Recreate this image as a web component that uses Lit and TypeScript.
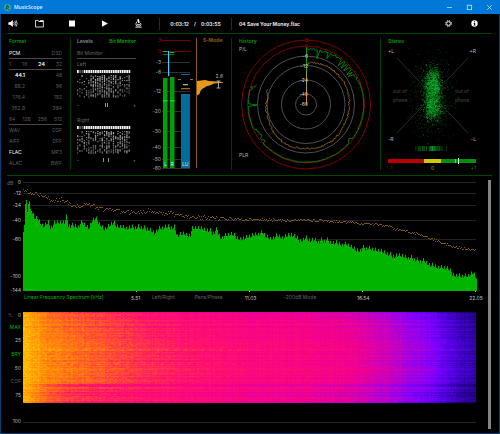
import { LitElement, html, svg, css } from "lit";
import { customElement, query } from "lit/decorators.js";

type Point = [number, number];

/* Small deterministic generator so every paint shows the same signal. */
function randomSource(seed: number): () => number {
  let s = seed >>> 0;
  return () => {
    s = (s + 0x6d2b79f5) >>> 0;
    let t = s;
    t = Math.imul(t ^ (t >>> 15), t | 1);
    t ^= t + Math.imul(t ^ (t >>> 7), t | 61);
    return ((t ^ (t >>> 14)) >>> 0) / 4294967296;
  };
}

function interpolate(points: Point[], x: number): number {
  if (x <= points[0][0]) return points[0][1];
  for (let i = 1; i < points.length; i++) {
    const [x1, y1] = points[i];
    if (x <= x1) {
      const [x0, y0] = points[i - 1];
      return y0 + ((y1 - y0) * (x - x0)) / (x1 - x0);
    }
  }
  return points[points.length - 1][1];
}

const panelStyles = css`
  :host {
    display: block;
    box-sizing: border-box;
    min-width: 0;
    font-size: 5px;
    line-height: 6px;
  }
  h2,
  h3,
  p {
    margin: 0;
    font-size: 5px;
    line-height: 6px;
  }
  button {
    appearance: none;
    margin: 0;
    padding: 0;
    border: 0;
    background: none;
    color: inherit;
    font: inherit;
    cursor: pointer;
  }
  svg {
    display: block;
    width: 100%;
    height: auto;
    overflow: visible;
    font-size: 5px;
  }
`;

@customElement("tool-bar")
export class ToolBar extends LitElement {
  static styles = [
    panelStyles,
    css`
      .bar {
        display: flex;
        align-items: center;
        height: 19px;
        border-bottom: 1px solid #004a00;
        margin: 0 7px 0 6px;
        padding-right: 12px;
        font-weight: 700;
        color: #e4e4e4;
      }
      .group {
        display: flex;
        gap: 22px;
      }
      .transport {
        margin-left: 16px;
      }
      .icon {
        display: block;
        width: 11px;
        height: 11px;
        color: #fff;
      }
      .icon svg {
        width: 11px;
        height: 11px;
      }
      .time {
        display: flex;
        justify-content: center;
        gap: 5px;
        width: 71px;
        margin-left: 15px;
        padding: 3px 0;
        border: solid #004a00;
        border-width: 0 1px;
      }
      .track {
        flex: 1;
        margin-left: 7px;
      }
      .right {
        gap: 15px;
      }
    `,
  ];

  render() {
    return html`
      <div class="bar">
        <button class="icon" aria-label="Volume">
          <svg viewBox="0 0 11 11" fill="none" stroke="currentColor">
            <path d="M1.4 4.2h1.8L5.8 2v7L3.200 6.800H1.400z" fill="currentColor" stroke="none" />
            <path d="M6.700 4q1 1.500 0 3M7.900 3q1.600 2.500 0 5M9.100 2.300q2.100 3.200 0 6.400" stroke-width=".7" />
          </svg>
        </button>
        <div class="group transport">
          <button class="icon" aria-label="Open folder">
            <svg viewBox="0 0 11 11" fill="none" stroke="currentColor" stroke-width=".8">
              <path d="M1.500 9V2.400h2.700l.8 1.100h4.400V9zM4.500 3.500h4.900V2.600H6" />
            </svg>
          </button>
          <button class="icon" aria-label="Stop">
            <svg viewBox="0 0 11 11"><rect x="2" y="2.500" width="6" height="6" fill="currentColor" /></svg>
          </button>
          <button class="icon" aria-label="Play">
            <svg viewBox="0 0 11 11"><path d="M2 2.500l6 3-6 3.200z" fill="currentColor" /></svg>
          </button>
          <button class="icon" aria-label="Analyse">
            <svg viewBox="0 0 11 11" fill="none" stroke="currentColor" stroke-width=".8">
              <path d="M4.200 1.400l1.600-.5 1 3.700-1.600.5z" fill="currentColor" stroke="none" />
              <path d="M4 3.500Q1.800 6 3.600 8h3.600q1.400-1.300.3-3M2.300 9.200h6.500M4 6.400h3" />
            </svg>
          </button>
        </div>
        <div class="time"><span>0:03:12</span><span>/</span><span>0:03:55</span></div>
        <span class="track">04 Save Your Money.flac</span>
        <div class="group right">
          <button class="icon" aria-label="Settings">
            <svg viewBox="0 0 11 11" fill="none" stroke="currentColor">
              <circle cx="5.500" cy="5.500" r="2.900" stroke-width=".9" stroke-dasharray="1.400 .88" />
              <circle cx="5.500" cy="5.500" r="1.900" stroke-width=".9" />
            </svg>
          </button>
          <button class="icon" aria-label="Information">
            <svg viewBox="0 0 11 11">
              <circle cx="5.500" cy="5.500" r="3.200" fill="currentColor" />
              <path d="M5 3.300h1v1H5zM4.600 5h1.500v2h.4v.6H4.600V7H5V5.600h-.4z" fill="#000" />
            </svg>
          </button>
        </div>
      </div>
    `;
  }
}

@customElement("format-panel")
export class FormatPanel extends LitElement {
  static styles = [
    panelStyles,
    css`
      h2 {
        height: 10px;
        color: #008c00;
      }
      .row {
        display: flex;
        justify-content: space-between;
        box-sizing: border-box;
        height: 11px;
        padding-top: 2px;
        color: #5c5c5c;
      }
      .ruled {
        border-bottom: 1px solid #484848;
      }
      .rates {
        display: grid;
        grid-template-columns: 16px 1fr;
        text-align: right;
      }
      .on {
        color: #f4f4f4;
      }
      .strong {
        font-weight: 700;
      }
    `,
  ];

  private rates = [["44.1", "48"], ["88.2", "96"], ["176.4", "192"], ["352.8", "384"]];
  private files = [["WAV", "DSF"], ["AIFF", "DFF"], ["FLAC", "MP3"], ["ALAC", "BWF"]];
  private active = ["44.1", "24", "PCM", "FLAC"];

  private cell(text: string) {
    const on = this.active.includes(text);
    const strong = text === "24" || text === "44.1";
    return html`<span class=${on ? (strong ? "on strong" : "on") : ""}>${text}</span>`;
  }

  render() {
    return html`
      <h2>Format</h2>
      <div class="row ruled">${["PCM", "DSD"].map((t) => this.cell(t))}</div>
      <div class="row ruled">${["1", "16", "24", "32"].map((t) => this.cell(t))}</div>
      ${this.rates.map((r) => html`<div class="row rates">${r.map((t) => this.cell(t))}</div>`)}
      <div class="row ruled">${["64", "128", "256", "512"].map((t) => this.cell(t))}</div>
      ${this.files.map((r) => html`<div class="row">${r.map((t) => this.cell(t))}</div>`)}
    `;
  }
}

@customElement("bit-panel")
export class BitPanel extends LitElement {
  static styles = [
    panelStyles,
    css`
      .tabs {
        display: flex;
        justify-content: space-between;
        height: 10px;
        font-weight: 700;
        color: #808080;
      }
      .tabs button {
        height: 6px;
      }
      .tabs .on {
        color: #009c00;
      }
      .name {
        box-sizing: border-box;
        height: 11px;
        padding-top: 2px;
        border-bottom: 1px solid #484848;
        font-weight: 400;
        color: #686868;
      }
      .side {
        height: 11px;
        padding-top: 2px;
        box-sizing: border-box;
        color: #686868;
      }
      .bits {
        padding-right: 5px;
      }
      .offset {
        display: flex;
        justify-content: space-between;
        align-items: center;
        height: 12px;
        margin-bottom: 4px;
        color: #909090;
      }
      .marks {
        display: flex;
        height: 4px;
        border: solid #909090;
        border-width: 0 1px;
        width: 1px;
      }
      .wide {
        width: 4px;
      }
    `,
  ];

  private bits(seed: number) {
    const rnd = randomSource(seed);
    const cells = [];
    for (let c = 0; c < 24; c++) {
      const x = c * 2.2;
      const dim = c > 0 && c < 3;
      cells.push(svg`<rect x=${x} y="0" width="1.700" height="3" fill=${dim ? "#555" : "#f4f4f4"} />`);
      const density = c < 5 ? 0.3 : 0.4 + rnd() * 0.35;
      for (let r = 0; r < 22; r++) {
        if (rnd() < density) {
          const g = Math.round(100 + rnd() * 110);
          cells.push(svg`<rect x=${x} y=${5 + r} width="1.200" height="1" fill=${`rgb(${g},${g},${g})`} />`);
        }
      }
    }
    return html`<svg viewBox="0 0 53 28" aria-hidden="true">${cells}</svg>`;
  }

  private channel(name: string, seed: number, wide: boolean) {
    return html`
      <p class="side">${name}</p>
      <div class="bits">${this.bits(seed)}</div>
      <div class="offset"><span>-</span><span class=${wide ? "marks wide" : "marks"}></span><span>+</span></div>
    `;
  }

  render() {
    return html`
      <div class="tabs"><button>Levels</button><button class="on">Bit Monitor</button></div>
      <h3 class="name">Bit Monitor</h3>
      ${this.channel("Left", 11, false)} ${this.channel("Right", 42, true)}
    `;
  }
}

@customElement("level-meter")
export class LevelMeter extends LitElement {
  static styles = [
    panelStyles,
    css`
      .label {
        fill: #b0b0b0;
        text-anchor: end;
      }
      .hot {
        fill: #b00000;
      }
      .foot {
        fill: #d8e8e0;
      }
      .mode {
        fill: #8a5a10;
        font-weight: 700;
      }
    `,
  ];

  /* Level in dB against its height on the meter. */
  private scale: Array<[string, number]> = [
    ["3", 2], ["0", 13], ["-3", 24], ["-6", 34], ["-12", 53], ["-20", 73],
    ["-30", 93], ["-40", 109], ["-50", 121], ["-60", 130],
  ];

  render() {
    return html`
      <svg viewBox="0 0 82 132" role="img" aria-label="Peak and loudness meter">
        ${this.scale.map(([t, y], i) => svg`
          <rect x="13" y=${y} width="28" height="1" fill=${i < 2 ? "#780000" : "#303030"} />
          <text class=${i < 2 ? "label hot" : "label"} x="12" y=${y + 2}>${t}</text>`)}
        <rect x="14" y="40" width="4.500" height="90" fill="#00a000" />
        <rect x="21" y="39" width="4.500" height="91" fill="#00a000" />
        <rect x="14" y="62" width="4.500" height="1.500" fill="#00e030" />
        <rect x="21" y="62" width="4.500" height="1.500" fill="#00e030" />
        <rect x="14" y="13" width="4.500" height="1" fill="#00b060" />
        <rect x="21" y="14" width="4.500" height="1" fill="#00c040" />
        <rect x="14" y="16" width="11.500" height="1" fill="#007800" />
        <rect x="19" y="13" width="1.200" height="25" fill="#50c8f0" />
        <rect x="32" y="56" width="9" height="74" fill="#006e98" />
        <rect x="32" y="36" width="9" height="1" fill="#006e98" />
        <rect x="29" y="41" width="3" height="1" fill="#a06c18" />
        <rect x="41" y="41" width="3" height="1" fill="#a06c18" />
        <rect x="34" y="46" width="5" height="1.300" fill="#a8a8a8" />
        <rect x="32" y="50" width="9" height="1.300" fill="#a06c18" />
        <text class="foot" x="15" y="128">L</text>
        <text class="foot" x="21.500" y="128">R</text>
        <text class="foot" x="33" y="128">LU</text>
        <rect x="47" y="0" width="1" height="130" fill="#8a5a10" />
        <path d="M48 43l8-1 4 1 14 1v.8l-9 .6-3 1.600-5 1.400-2 1.500-2 1-1.500 2-1 3-2.500 1.500z" fill="#e8981c" />
        <text class="mode" x="54" y="4">S-Mode</text>
        <text class="label" x="74" y="40">2.6</text>
        <path d="M67.500 43h4M69.500 43v7M67.500 50h4" stroke="#c8c8c8" fill="none" stroke-width=".8" />
      </svg>
    `;
  }
}

@customElement("history-panel")
export class HistoryPanel extends LitElement {
  static styles = [
    panelStyles,
    css`
      .title {
        fill: #008c00;
        font-weight: 700;
      }
      .corner {
        fill: #b0b0b0;
      }
      .label {
        fill: #d0d0d0;
        text-anchor: end;
      }
      .hot {
        fill: #c00000;
      }
    `,
  ];

  private rings: Array<[number, string]> = [
    [64.5, "#8c0000"], [58.5, "#8c0000"], [48.5, "#585858"], [39, "#585858"], [24.5, "#585858"], [10.5, "#585858"],
  ];
  private labels: Array<[string, number]> = [["-6", 20], ["-12", 30], ["-24", 44], ["-40", 58], ["-60", 68]];

  private trace(shape: Point[], start: number, end: number, jitter: (a: number, r: number) => number, seed: number) {
    const rnd = randomSource(seed);
    let d = "";
    for (let a = start; a <= end; a += 1.4) {
      const r = interpolate(shape, a) + jitter(a, rnd());
      const t = (a * Math.PI) / 180;
      d += `${d ? "L" : "M"}${(74 + Math.sin(t) * r).toFixed(1)} ${(66.5 - Math.cos(t) * r).toFixed(1)}`;
    }
    return d;
  }

  render() {
    const peak = this.trace([[0, 57], [40, 57.5], [80, 58], [300, 58]], 2, 293, (a, r) => {
      if (a < 22) return r > 0.8 ? -10 : -r * 3;
      if (a < 66) return r > 0.84 ? -7 : -r * 2;
      if (a > 124 && a < 132) return -r * 4;
      if (a > 228 && a < 246) return -r * 5;
      if (a > 268.5 && a < 270.5) return -9;
      if (a > 285) return -r * 6;
      return -r * 0.7;
    }, 5);
    const loud = this.trace(
      [[0, 36], [4, 42], [33, 43.500], [62, 44], [90, 43], [115, 43], [147, 45], [180, 44], [210, 44.300],
        [232, 42.500], [250, 40], [263, 40.500], [280, 38.500], [292, 42]],
      2, 292, (_a, r) => (r - 0.5) * 1.9, 9);
    return html`
      <svg viewBox="0 0 148 132" role="img" aria-label="Loudness history">
        ${this.rings.map(([r, c]) => svg`<circle cx="74" cy="66.500" r=${r} fill="none" stroke=${c} stroke-width=".9" />`)}
        <path d=${peak} fill="none" stroke="#009c14" stroke-width=".8" />
        <path d=${loud} fill="none" stroke="#b87820" stroke-width=".7" />
        <path d="M74.500 9v24" stroke="#00a010" />
        <path d="M74.500 33v18" stroke="#a0a020" />
        <path d="M74.500 51v16" stroke="#d08820" />
        <text class="label hot" x="76" y="4">3</text>
        <text class="label hot" x="76" y="10">0</text>
        ${this.labels.map(([t, y]) => svg`<text class="label" x="76" y=${y}>${t}</text>`)}
        <text class="title" x="7" y="5">History</text>
        <text class="corner" x="7" y="13">P/L</text>
        <text class="corner" x="7" y="119">PLR</text>
      </svg>
    `;
  }
}

@customElement("stereo-panel")
export class StereoPanel extends LitElement {
  static styles = [
    panelStyles,
    css`
      .title {
        fill: #008c00;
        font-weight: 700;
      }
      .corner {
        fill: #b8b8b8;
      }
      .end {
        text-anchor: end;
      }
      .dim {
        fill: #444;
      }
      .low {
        fill: #a00000;
      }
      .mid {
        fill: #b0a800;
        text-anchor: middle;
      }
      .high {
        fill: #008c00;
        text-anchor: end;
      }
    `,
  ];

  private cloud() {
    const rnd = randomSource(77);
    const gauss = () => rnd() + rnd() + rnd() + rnd() - 2;
    const layers = ["", "", ""];
    for (let i = 0; i < 2600; i++) {
      const wide = rnd() < 0.25;
      const x = 51.5 + gauss() * (wide ? 18 : 7);
      const y = wide ? 57 + gauss() * 33 : (rnd() < 0.55 ? 45 : 67) + gauss() * 13;
      layers[wide ? 0 : rnd() < 0.7 ? 1 : 2] += `M${x.toFixed(1)} ${y.toFixed(1)}h.7v.7h-.7z`;
    }
    return ["#00580f", "#007c18", "#10b430"].map((c, i) => svg`<path d=${layers[i]} fill=${c} />`);
  }

  private spread() {
    const rnd = randomSource(3);
    const lines = [];
    for (let x = 22; x < 79; x++) {
      const near = Math.abs(x - 49) / 30;
      if (rnd() > near * 1.3) {
        lines.push(svg`<rect x=${x} y="108" width="1" height="5" fill="#00a82c" opacity=${Math.max(0.15, 1 - near - rnd() * 0.5)} />`);
      }
    }
    return lines;
  }

  render() {
    return html`
      <svg viewBox="0 0 111 132" role="img" aria-label="Stereo field">
        <path d="M16 20L87 95M87 20L16 95" stroke="#303030" stroke-width=".9" />
        ${this.cloud()} ${this.spread()}
        <text class="title" x="7" y="5">Stereo</text>
        <text class="corner" x="7" y="15">+L</text>
        <text class="corner end" x="95" y="15">+R</text>
        <text class="corner" x="7" y="103">-R</text>
        <text class="corner end" x="95" y="103">-L</text>
        <text class="dim" x="12" y="55">out of</text>
        <text class="dim" x="12" y="64">phase</text>
        <text class="dim" x="74" y="55">out of</text>
        <text class="dim" x="74" y="64">phase</text>
        <rect x="7" y="121" width="36" height="4" fill="#b80000" />
        <rect x="43" y="121" width="17" height="4" fill="#d0c800" />
        <rect x="60" y="121" width="35" height="4" fill="#009010" />
        <rect x="74" y="121" width="1" height="4" fill="#60d070" />
        <rect x="77" y="120" width="1" height="6" fill="#fff" />
        <text class="low" x="7" y="132">-1</text>
        <text class="mid" x="51.500" y="132">0</text>
        <text class="high" x="95" y="132">+1</text>
      </svg>
    `;
  }
}

@customElement("spectrum-chart")
export class SpectrumChart extends LitElement {
  static styles = [
    panelStyles,
    css`
      .chart {
        display: grid;
        grid-template-columns: 22px 1fr;
      }
      .scale {
        width: 22px;
        height: 114px;
        grid-row: span 2;
      }
      .plot {
        height: 112px;
      }
      .label {
        fill: #c4c4c4;
        text-anchor: end;
      }
      .unit {
        fill: #686868;
      }
      .axis {
        grid-column: 2;
        display: grid;
        grid-template-columns: repeat(4, 1fr);
        height: 10px;
        color: #646464;
      }
      .cell {
        display: flex;
        align-items: center;
        gap: 20px;
        white-space: nowrap;
      }
      .main {
        color: #00b400;
        margin-left: 1px;
      }
      .mode {
        margin-left: 16px;
      }
      .later {
        margin-left: 33px;
      }
      .tick {
        width: 16px;
        margin: 0 -8px 0 auto;
        padding-top: 2px;
        text-align: center;
        color: #c4c4c4;
      }
    `,
  ];

  private scale: Array<[string, number]> = [
    ["0", 2], ["-12", 13], ["-24", 25], ["-40", 40], ["-60", 59], ["-100", 96], ["-144", 110],
  ];

  private level: Point[] = [
    [0, 52], [1, 45], [2, 24], [3, 20], [4, 32], [5, 24], [6, 21], [7, 29], [9, 33], [11, 38], [15, 38], [18, 43],
    [21, 46], [25, 42], [27, 47], [31, 44], [36, 42], [41, 43], [43, 38], [45, 44], [49, 46], [55, 46], [59, 43],
    [65, 49], [69, 40], [72, 39], [75, 42], [81, 48], [87, 44], [90, 43], [93, 47], [104, 48], [115, 46], [120, 48],
    [127, 48], [131, 52], [137, 49], [151, 47], [154, 55], [167, 54], [169, 50], [183, 49], [189, 52], [194, 50],
    [197, 56], [209, 56], [217, 58], [227, 57], [233, 54], [239, 53], [243, 58], [249, 59], [255, 56], [261, 57],
    [268, 54], [276, 61], [282, 57], [293, 62], [302, 61], [313, 63], [325, 65], [333, 70], [345, 68], [357, 70],
    [369, 75], [377, 77], [389, 79], [401, 81], [407, 86], [423, 89], [429, 93], [437, 95], [445, 96], [450, 93], [453, 99],
  ];

  private peaks: Point[] = [
    [0, 10], [7, 12], [17, 14], [23, 16], [29, 20], [39, 19], [45, 22], [52, 26], [67, 24], [77, 28], [83, 30],
    [112, 32], [127, 30], [137, 34], [147, 32], [157, 36], [192, 38], [217, 39], [277, 40], [297, 40], [312, 41],
    [337, 43], [362, 45], [377, 50], [389, 52], [402, 56], [417, 62], [429, 66], [439, 68], [453, 69],
  ];

  render() {
    const rnd = randomSource(21);
    let area = "M0 111";
    let held = 0;
    for (let x = 0; x <= 453; x++) {
      if (x % 3 === 0) held = (rnd() - 0.5) * 4;
      const tooth = x % 3 === 1 ? -2 : 1;
      const y = interpolate(this.level, x) + (x > 8 ? held + tooth : 0);
      area += `V${y.toFixed(1)}H${x + 1}`;
    }
    area += "V111z";
    let dots = "";
    for (let x = 0; x < 453; x += 1) {
      const spread = x < 100 ? 5 : x < 200 ? 4.5 : 2.6;
      const y = Math.round(interpolate(this.peaks, x) + (rnd() - 0.5) * spread);
      dots += `M${x} ${y}h1v1h-1z`;
    }
    return html`
      <div class="chart">
        <svg class="scale" viewBox="0 0 22 114" aria-hidden="true">
          <text class="unit" x="6" y="5">dB</text>
          ${this.scale.map(([t, y]) => svg`<text class="label" x="20" y=${y + 2}>${t}</text>`)}
        </svg>
        <svg class="plot" viewBox="0 0 453 112" preserveAspectRatio="none" role="img" aria-label="Frequency spectrum">
          ${this.scale.slice(0, 5).map(([, y]) => svg`<rect x="0" y=${y} width="453" height="1" fill="#242424" />`)}
          <path d=${dots} fill="#805808" />
          <path d=${area} fill="#00b400" />
          ${[113, 226, 339, 452].map((x) => svg`<rect x=${x} y="111" width="1" height="1" fill="#b8b8b8" />`)}
        </svg>
        <div class="axis">
          <div class="cell"><button class="main">Linear Frequency Spectrum [kHz]</button><span class="tick">5.51</span></div>
          <div class="cell">
            <button class="mode">Left/Right</button><button>Pans/Phase</button><span class="tick">11.03</span>
          </div>
          <div class="cell"><button class="later">-200dB Mode</button><span class="tick">16.54</span></div>
          <div class="cell"><span class="tick">22.05</span></div>
        </div>
      </div>
    `;
  }
}

@customElement("spectrogram-chart")
export class SpectrogramChart extends LitElement {
  static styles = [
    panelStyles,
    css`
      .chart {
        display: grid;
        grid-template-columns: 22px 1fr;
      }
      .scale {
        width: 22px;
        height: 114px;
      }
      .label {
        fill: #b4b4b4;
        text-anchor: end;
      }
      .on {
        fill: #00b400;
      }
      .dim {
        fill: #5c5c5c;
      }
      .plot {
        padding-top: 2px;
      }
      canvas {
        display: block;
        width: 100%;
        height: 91px;
      }
      .rest {
        height: 19px;
        border-bottom: 1px solid #242424;
      }
    `,
  ];

  @query("canvas") private surface!: HTMLCanvasElement;

  private labels: Array<[string, number, string]> = [
    ["0", 7, ""], ["MAX", 19, "on"], ["25", 32, ""], ["BRY", 46, "on"], ["50", 60, ""],
    ["COF", 73, "dim"], ["75", 87, ""], ["100", 113, ""],
  ];

  private stops = [
    [14, 0, 80], [40, 0, 150], [78, 0, 220], [128, 0, 255], [190, 0, 200],
    [244, 0, 140], [255, 16, 110], [255, 78, 50], [255, 138, 8], [255, 200, 0],
  ];

  private colour(v: number): number[] {
    const p = Math.max(0, Math.min(0.999, v)) * (this.stops.length - 1);
    const i = Math.floor(p);
    return this.stops[i].map((c, k) => c + (this.stops[i + 1][k] - c) * (p - i));
  }

  firstUpdated() {
    const base: Point[] = [
      [0, 0.97], [14, 0.92], [24, 0.87], [45, 0.83], [75, 0.78], [100, 0.735], [135, 0.685], [180, 0.64], [225, 0.6],
      [290, 0.575], [330, 0.53], [365, 0.46], [385, 0.39], [405, 0.33], [420, 0.27], [435, 0.18], [453, 0.12],
    ];
    const w = 453;
    const h = 91;
    const ctx = this.surface.getContext("2d")!;
    const image = ctx.createImageData(w, h);
    const rnd = randomSource(8);
    const column = Array.from({ length: w }, () => (rnd() - 0.5) * 0.03);
    for (let y = 0; y < h; y++) {
      let row = (rnd() - 0.5) * 0.06 + Math.sin((Math.PI * y) / h) * 0.04 - 0.02;
      if (y === 14 || y === 15) row -= 0.04;
      if ((y > 71 && y < 75) || (y > 79 && y < 84)) row -= 0.04;
      if (y === 0 || y === h - 1) row -= 0.1;
      let grain = 0;
      for (let x = 0; x < w; x++) {
        if (x % 2 === 0) grain = (rnd() - 0.5) * (x < 110 ? 0.07 : 0.045);
        const fade = Math.max(0, Math.min(1, (x - 8) / 30, (140 - x) / 70));
        const edge = y > 71 ? -0.06 * fade : 0;
        const beat = x > 25 && x < 230 && (y === 37 || y === 38 || y === 51 || y === 52) && (x + y) % 9 < 3 ? 0.04 : 0;
        const calm = Math.min(1, 0.4 + x / 60);
        const c = this.colour(interpolate(base, x) + row * calm + grain + column[x] + edge + beat);
        const o = (y * w + x) * 4;
        image.data[o] = c[0];
        image.data[o + 1] = c[1];
        image.data[o + 2] = c[2];
        image.data[o + 3] = 255;
      }
    }
    ctx.putImageData(image, 0, 0);
  }

  render() {
    return html`
      <div class="chart">
        <svg class="scale" viewBox="0 0 22 114" aria-hidden="true">
          <text class="dim" x="7" y="7">%</text>
          ${this.labels.map(([t, y, c]) => svg`<text class=${`label ${c}`} x="20" y=${y}>${t}</text>`)}
        </svg>
        <div class="plot">
          <canvas width="453" height="91" role="img" aria-label="Spectrogram"></canvas>
          <div class="rest"></div>
        </div>
      </div>
    `;
  }
}

@customElement("app-root")
export class AppRoot extends LitElement {
  static styles = [
    panelStyles,
    css`
      :host {
        display: flex;
        flex-direction: column;
        min-height: 100vh;
        border: solid #0a4070;
        border-width: 0 1px 1px;
        background: #000;
        font-family: Inter, "Liberation Sans", sans-serif;
      }
      .title {
        display: flex;
        align-items: center;
        gap: 3px;
        height: 14px;
        margin: 0 -1px;
        padding: 0 7px 0 4px;
        background: #0078d7;
        color: #e8f2fc;
      }
      .logo {
        width: 7px;
        height: 7px;
      }
      .name {
        flex: 1;
        font-family: "Open Sans", sans-serif;
        font-weight: 600;
      }
      .window {
        display: flex;
        gap: 13px;
      }
      .window svg {
        width: 7px;
        height: 7px;
      }
      .panels {
        display: grid;
        grid-template-columns: 62fr 78fr 83fr 149fr 111fr;
        margin: 0 7px 0 6px;
        padding: 4px 0 5px 2px;
        border-bottom: 1px solid #004a00;
      }
      .lined {
        border-right: 1px solid #003c00;
      }
      .format {
        padding-right: 8px;
      }
      .bit {
        padding: 0 13px 0 6px;
      }
      .lower {
        flex: 1;
        display: flex;
        gap: 12px;
        padding: 4px 8px 4px 0;
      }
      .charts {
        flex: 1;
        min-width: 0;
        display: flex;
        flex-direction: column;
        gap: 8px;
      }
      .scroll {
        width: 3px;
        background: #848484;
      }
    `,
  ];

  render() {
    return html`
      <header class="title">
        <svg class="logo" viewBox="0 0 7 7" aria-hidden="true">
          <circle cx="3.500" cy="3.500" r="3.400" fill="#34a89c" />
          <path d="M2 5.800L3.400 1l1.400 2.700M3 3.500l1.800 2.300" fill="none" stroke="#0c3c40" stroke-width=".9" />
        </svg>
        <span class="name">MusicScope</span>
        <div class="window">
          <button aria-label="Minimize"><svg viewBox="0 0 7 7"><path d="M1 3.500h5" stroke="#e0f0ff" stroke-width=".7" /></svg></button>
          <button aria-label="Maximize">
            <svg viewBox="0 0 7 7"><rect x="1.200" y="1.200" width="4.500" height="4.500" fill="none" stroke="#e0f0ff" stroke-width=".7" /></svg>
          </button>
          <button aria-label="Close">
            <svg viewBox="0 0 7 7"><path d="M1.200 1.200l4.600 4.600M5.800 1.200L1.200 5.800" stroke="#e0f0ff" stroke-width=".7" /></svg>
          </button>
        </div>
      </header>
      <tool-bar></tool-bar>
      <section class="panels">
        <format-panel class="format lined"></format-panel>
        <bit-panel class="bit"></bit-panel>
        <level-meter class="lined"></level-meter>
        <history-panel class="lined"></history-panel>
        <stereo-panel></stereo-panel>
      </section>
      <main class="lower">
        <div class="charts">
          <spectrum-chart></spectrum-chart>
          <spectrogram-chart></spectrogram-chart>
        </div>
        <div class="scroll"></div>
      </main>
    `;
  }
}
